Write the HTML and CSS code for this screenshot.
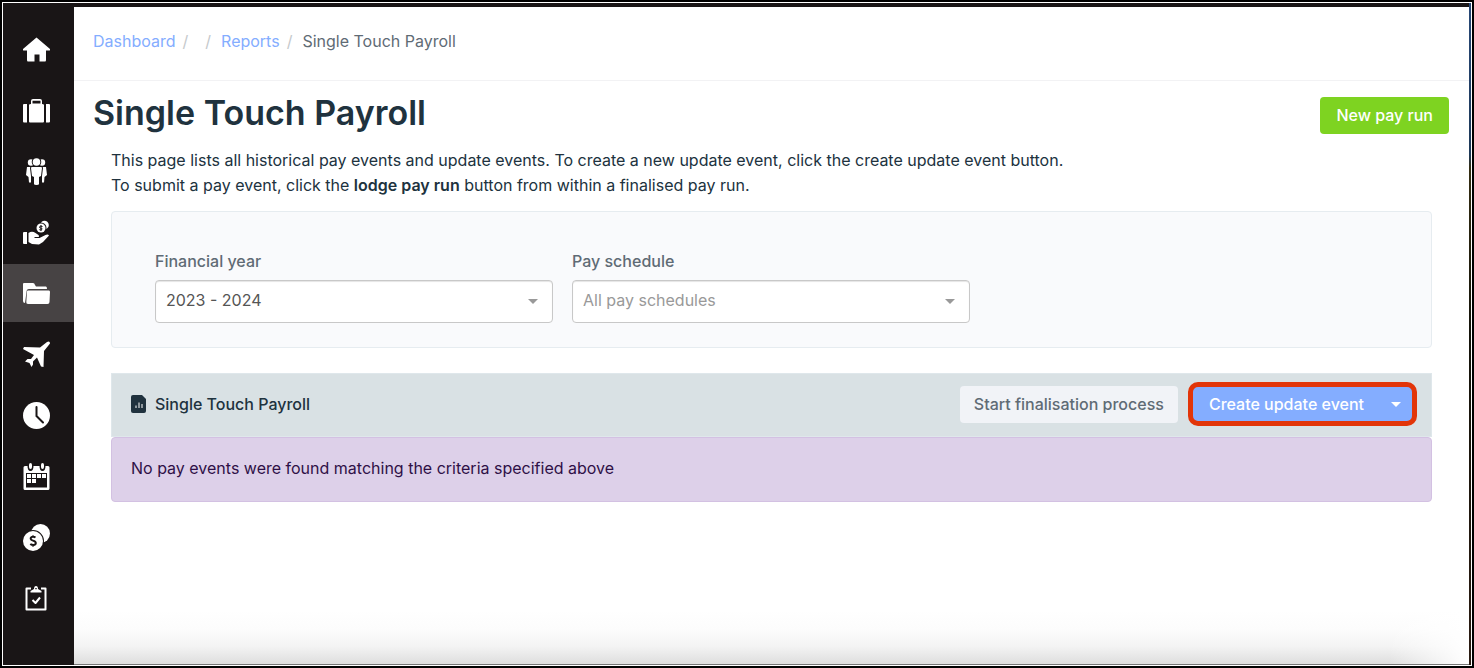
FILE: index.html
```
<!DOCTYPE html>
<html lang="en">
<head>
<meta charset="utf-8">
<meta name="viewport" content="width=device-width, initial-scale=1">
<title>Single Touch Payroll</title>
<link rel="stylesheet" href="styles.css">
</head>
<body>
<div class="frame">
  <div class="window">
    <nav class="sidebar" aria-label="Main">
      <a class="nav-item" href="#" aria-label="Home"><svg class="icon" viewBox="0 0 27 27"><path d="M13.500 1.500 27 13q.5 1.500-1 1.500h-3V24q0 1.500-1 1.500h-5.500v-7h-5v7H5q-1 0-1-1.500v-9.500H1Q-.5 14.500 0 13z"/></svg></a>
      <a class="nav-item" href="#" aria-label="Business"><svg class="icon" viewBox="0 0 27 27"><path d="M1 7h3v18.500H1q-1 0-1-1V8q0-1 1-1zM23 7h3q1 0 1 1v16.500q0 1-1 1h-3zM6 8q0-1 2-1V4q0-2 2-2h7q2 0 2 2v3q2 0 2 1v16.500q0 1-1 1H7q-1 0-1-1zm3.500-1.500h8V3.700h-8z" fill-rule="evenodd"/></svg></a>
      <a class="nav-item" href="#" aria-label="Employees"><svg class="icon" viewBox="0 0 27 27"><circle cx="8" cy="4.500" r="3.200"/><circle cx="19" cy="4.500" r="3.200"/><path d="M4 9h4v15.500H6L5.500 19 3 17zM19 9h4l1 8-2.500 2-.5 5.500h-2z"/><g class="cutout"><circle cx="13.500" cy="4" r="3.800"/><path d="M9 9h9q1 0 1 1l-1 8-2 1v7q0 1-2.500 1T11 26v-7l-2-1-1-8q0-1 1-1z"/></g></svg></a>
      <a class="nav-item" href="#" aria-label="Pay runs"><svg class="icon" viewBox="0 0 27 27"><circle cx="21.500" cy="6" r="4.300"/><g class="cutout"><circle cx="18" cy="9" r="4.500"/></g><path class="line" d="M19.500 7.500q-3-1-3 .5t2 1.200q1.500 1-.2 1.600t-2-.3M18 6v6"/><path d="M0 14q0-1 1-1h3v12H1q-1 0-1-1zM5.500 14q3.500-2.500 7 0l3 2q1.500 2-1 2h-3v1h5l6-3q2.500-1 3.500.5l-6 6.500-4 2.500-7-.5-3.500-2z"/></svg></a>
      <a class="nav-item nav-item-active" href="#" aria-label="Reports" aria-current="page"><svg class="icon" viewBox="0 0 27 27"><path d="M1 3h9q1.500 0 2 2l1 1.500h10q1 0 1 2.500H6q-2.500 0-2.500 3L2 23q-2 0-2-2V4q0-1 1-1z"/><path d="M5 10.500h21q1 0 1 1.500l-.5 10q0 2-2 2H5q-2 0-1.700-2L4 11.500q0-1 1-1z"/></svg></a>
      <a class="nav-item" href="#" aria-label="Leave"><svg class="icon" viewBox="0 0 27 27"><path d="M24 1q3-1.500 3 1.500l-6 7.500L20.500 26 18 25.500 14 16.500l-4 4v3L8.500 26l-2-4L2 20.500 4.500 18H8l3-4L0 8 1 6l16 .5z"/></svg></a>
      <a class="nav-item" href="#" aria-label="Timesheets"><svg class="icon" viewBox="0 0 27 27"><circle cx="13.500" cy="13.500" r="13.500"/><path class="hands" d="M13.500 5v9l6.500 6.500"/></svg></a>
      <a class="nav-item" href="#" aria-label="Roster"><svg class="icon" viewBox="0 0 27 27"><path fill-rule="evenodd" d="M2 3h2.500q0 5 3 5t3-5h6q0 5 3 5t3-5H25q1.500 0 1.500 1.500V25.500q0 1.500-1.500 1.500H2Q.5 27 .5 25.500v-21Q.5 3 2 3zM3 10v14.500h21V10z"/><path d="M6 2q0-2 1.500-2T9 2v2q0 2-1.500 2T6 4zM18 2q0-2 1.500-2T21 2v2q0 2-1.500 2T18 4zM4 11h4v4H4zM9 11h4v4H9zM14 11h4v4h-4zM19 11h4v4h-4zM4 16h4v4H4zM9 16h4v4H9z"/></svg></a>
      <a class="nav-item" href="#" aria-label="Expenses"><svg class="icon" viewBox="0 0 27 27"><circle cx="17.500" cy="9.500" r="9.500"/><g class="cutout"><circle cx="10" cy="17" r="10"/></g><path class="dollar" d="M12.500 13.500q-1.500-1-3-.7-2 .5-1.800 2 .2 1.200 2.300 1.800 2.800.8 2.800 2.400 0 1.800-2.300 2-2 0-3.200-1M10 11.500v1.500M10 21v1.500"/></svg></a>
      <a class="nav-item" href="#" aria-label="Tasks"><svg class="icon" viewBox="0 0 27 27"><path class="board" d="M8 3.500H3.500v21h19v-21H18"/><path fill-rule="evenodd" d="M7.500 7.500V6L11 4q0-3 2-3t2 3l3.500 2v1.500zM12.300 3v1.200h1.400V3z"/><path class="board" d="m9.500 15 3 3 4.500-5.500"/></svg></a>
    </nav>
    <div class="content">
      <header class="topbar">
        <ol class="breadcrumb">
          <li><a href="#">Dashboard</a></li>
          <li></li>
          <li><a href="#">Reports</a></li>
          <li aria-current="page">Single Touch Payroll</li>
        </ol>
      </header>
      <main class="main">
        <div class="page-head">
          <h1>Single Touch Payroll</h1>
          <button class="button button-green" type="button">New pay run</button>
        </div>
        <div class="page-body">
          <p class="intro">This page lists all historical pay events and update events. To create a new update event, click the create update event button.<br>To submit a pay event, click the <strong>lodge pay run</strong> button from within a finalised pay run.</p>
          <form class="filters">
            <div class="field">
              <label for="year">Financial year</label>
              <div class="select-wrap"><select id="year"><option>2023 - 2024</option></select></div>
            </div>
            <div class="field">
              <label for="schedule">Pay schedule</label>
              <div class="select-wrap"><select id="schedule" class="placeholder"><option>All pay schedules</option></select></div>
            </div>
          </form>
          <section class="events">
            <div class="events-head">
              <svg class="report-icon" viewBox="0 0 16 18"><path d="M2 0h9l4 4v12q0 2-2 2H2q-2 0-2-2V2q0-2 2-2z"/><path class="bars" d="M5 10.500V13M8 7.500V13M11 9v4"/></svg>
              <h2>Single Touch Payroll</h2>
              <button class="button button-light" type="button">Start finalisation process</button>
              <div class="split-button">
                <button class="split-main" type="button">Create update event</button>
                <button class="split-toggle" type="button" aria-label="More actions"></button>
              </div>
            </div>
            <div class="alert" role="status">No pay events were found matching the criteria specified above</div>
          </section>
        </div>
      </main>
    </div>
  </div>
</div>
</body>
</html>
```
FILE: styles.css
```
* { box-sizing: border-box; }

body {
  margin: 0;
  font-family: Inter, Lato, sans-serif;
  font-size: 16px;
  line-height: 25px;
  color: #20323e;
}

button, select { font: inherit; }

.frame {
  display: flex;
  min-height: 100vh;
  padding: 1px;
  border: 2px solid #000;
  background: #fff;
}

.window {
  display: flex;
  flex: 1;
  min-width: 0;
  border-right: 2px solid #14130a;
  border-image: linear-gradient(#284877, #1d3857 23%, #342d12 25%, #14130a 50%, #2b1b12) 1;
  border-image-width: 0 2px 0 0;
  background: #fff;
}

.sidebar {
  display: flex;
  flex-direction: column;
  flex: none;
  gap: 3px;
  width: 71px;
  padding-top: 17px;
  background: #191516;
}

.nav-item {
  display: flex;
  align-items: center;
  justify-content: center;
  height: 58px;
  padding-right: 4px;
}

.nav-item-active { background: #474344; }

.icon {
  width: 27px;
  height: 27px;
  fill: #fff;
}

.cutout { stroke: #191516; stroke-width: 2; paint-order: stroke; }
.line { fill: none; stroke: #191516; stroke-width: 1; }
.hands { fill: none; stroke: #191516; stroke-width: 2; stroke-linecap: round; }
.dollar { fill: none; stroke: #191516; stroke-width: 2; }
.board { fill: none; stroke: #fff; stroke-width: 2; stroke-linejoin: round; }

.content {
  display: flex;
  flex-direction: column;
  flex: 1;
  min-width: 0;
  border-top: 4px solid #191516;
  border-bottom: 1px solid #777;
  background:
    linear-gradient(to left, #fff, transparent 80px) bottom / 100% 54px no-repeat,
    linear-gradient(to top, #dedede, #f4f4f4 18px, #fcfcfc 34px, #fff 54px);
}

.topbar {
  padding: 22px 19px 26px;
  border-bottom: 1px solid #f2f2f4;
}

.breadcrumb {
  display: flex;
  margin: 0;
  padding: 0;
  list-style: none;
  color: #5f6b75;
}

.breadcrumb a { color: #84adff; text-decoration: none; }

.breadcrumb li + li::before {
  content: "/";
  padding: 0 10px 0 7px;
  color: #c5c9cc;
}

.main { padding: 12px 20px 40px 19px; }

.page-head {
  display: flex;
  align-items: flex-start;
  justify-content: space-between;
}

h1 {
  margin: 0;
  font-size: 34px;
  line-height: 40px;
  font-weight: 600;
}

.button {
  height: 37px;
  padding: 0 16px 1px;
  border: 0;
  border-radius: 4px;
  font-weight: 500;
  white-space: nowrap;
}

.button-green { margin-top: 4px; background: #7ed321; color: #fff; }
.button-light { padding: 0 14px; background: #f1f3f7; color: #5f6b75; }

.page-body { padding: 14px 17px 0 18px; }

.intro { margin: 0 0 13px; }
.intro strong { font-weight: 600; }

.filters {
  display: flex;
  gap: 19px;
  padding: 37px 43px 24px;
  border: 1px solid #e6ecf0;
  border-radius: 4px;
  background: #f9fafc;
}

.field { flex: 0 1 398px; }

.field label {
  display: block;
  margin-bottom: 6px;
  color: #5f6b75;
  font-weight: 500;
}

.select-wrap { position: relative; }

.select-wrap::after {
  content: "";
  position: absolute;
  top: 19px;
  right: 15px;
  border: 5px solid transparent;
  border-top-color: #999;
  border-bottom: 0;
  pointer-events: none;
}

select {
  display: block;
  width: 100%;
  height: 43px;
  padding: 0 30px 3px 10px;
  border: 1px solid #c8c8c8;
  border-radius: 4px;
  appearance: none;
  background: #fff;
  box-shadow: inset 0 1px 1px #e5e5e5;
  color: #555;
}

.placeholder { color: #999; }

.events { margin-top: 25px; }

.events-head {
  display: flex;
  align-items: center;
  height: 64px;
  padding: 0 14px 2px 19px;
  border: 1px solid #dfe7eb;
  background: #d9e1e4;
}

.report-icon { width: 16px; height: 18px; fill: #20323e; }
.bars { stroke: #fff; stroke-width: 1; }

h2 {
  margin: 0 auto 0 8px;
  font-size: 16px;
  line-height: 25px;
  font-weight: 500;
}

.split-button {
  display: flex;
  height: 44px;
  margin-left: 10px;
  border: 5px solid #e23509;
  border-radius: 10px;
  background: #84adff;
}

.split-main, .split-toggle {
  border: 0;
  background: none;
  color: #fff;
  font-weight: 500;
  white-space: nowrap;
}

.split-main { padding: 0 16px; }
.split-toggle { width: 32px; padding: 0 11px; }

.split-toggle::before {
  content: "";
  display: block;
  border: 5px solid transparent;
  border-top-color: #fff;
  border-bottom: 0;
}

.alert {
  padding: 18px 19px 20px;
  border: 1px solid #d3c1e2;
  border-radius: 4px;
  background: #ddd0e9;
  color: #2f1047;
}
```
